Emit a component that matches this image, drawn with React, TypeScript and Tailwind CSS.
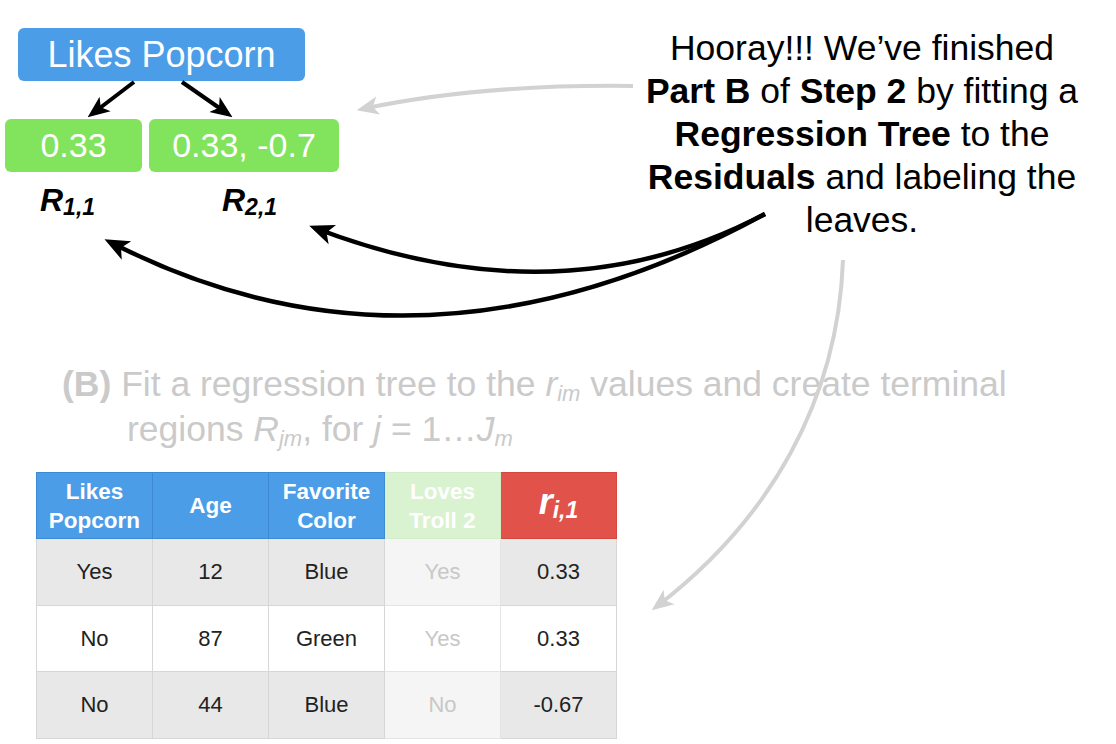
import React from "react";

const rows = [
  { pop: "Yes", age: "12", color: "Blue", troll: "Yes", r: "0.33", bg: "bg-[#e8e8e8]", fade: "bg-[#f5f5f5]" },
  { pop: "No", age: "87", color: "Green", troll: "Yes", r: "0.33", bg: "bg-white", fade: "bg-white" },
  { pop: "No", age: "44", color: "Blue", troll: "No", r: "-0.67", bg: "bg-[#e8e8e8]", fade: "bg-[#f5f5f5]" },
];

function Arrows() {
  return (
    <svg className="absolute inset-0 pointer-events-none" width="1116" height="744" viewBox="0 0 1116 744">
      <defs>
        <marker id="hb" viewBox="0 0 12 10" refX="9" refY="5" markerWidth="5.5" markerHeight="5.5" orient="auto" markerUnits="strokeWidth">
          <path d="M0,0 L12,5 L0,10 L3,5 z" fill="#000" />
        </marker>
        <marker id="hg" viewBox="0 0 12 10" refX="9" refY="5" markerWidth="5.5" markerHeight="5.5" orient="auto" markerUnits="strokeWidth">
          <path d="M0,0 L12,5 L0,10 L3,5 z" fill="#d2d2d2" />
        </marker>
      </defs>
      {/* tree edges */}
      <path d="M134,82 L92,114" stroke="#000" strokeWidth="4" fill="none" markerEnd="url(#hb)" />
      <path d="M182,82 L228,114" stroke="#000" strokeWidth="4" fill="none" markerEnd="url(#hb)" />
      {/* grey pointers */}
      <path d="M633,86 Q480,84 362,109" stroke="#d2d2d2" strokeWidth="4" fill="none" markerEnd="url(#hg)" />
      <path d="M843,260 C838,400 770,520 656,607" stroke="#d2d2d2" strokeWidth="4" fill="none" markerEnd="url(#hg)" />
      {/* leaf pointers */}
      <path d="M765,214 Q560,322 315,228" stroke="#000" strokeWidth="4.5" fill="none" markerEnd="url(#hb)" />
      <path d="M765,214 Q420,402 110,242" stroke="#000" strokeWidth="4.5" fill="none" markerEnd="url(#hb)" />
    </svg>
  );
}

function RLabel({ sub }: { sub: string }) {
  return (
    <span className="font-bold italic text-[32px] text-black leading-none">
      R<span className="text-[23px] align-[-4px]">{sub}</span>
    </span>
  );
}

function Sub({ children }: { children: React.ReactNode }) {
  return <span className="text-[22px] italic leading-none align-[-5px]">{children}</span>;
}

export default function App() {
  return (
    <div
      className="relative w-[1116px] h-[744px] bg-white overflow-hidden"
      style={{ fontFamily: '"Liberation Sans", Arial, sans-serif' }}
    >
      {/* Top row */}
      <div className="flex justify-between">
        <div className="pl-[5px] pt-[28px]">
          <div className="ml-[13px] w-[287px] h-[53px] rounded-[6px] bg-[#4b9de8] flex items-center justify-center text-white text-[36px]">
            Likes Popcorn
          </div>
          <div className="flex gap-[7px] mt-[38px]">
            <div className="w-[137px] h-[53px] rounded-[6px] bg-[#82e35c] flex items-center justify-center text-white text-[34px]">
              0.33
            </div>
            <div className="w-[190px] h-[53px] rounded-[6px] bg-[#82e35c] flex items-center justify-center text-white text-[34px]">
              0.33, -0.7
            </div>
          </div>
          <div className="flex mt-[12px]">
            <div className="w-[137px] pl-[35px]">
              <RLabel sub="1,1" />
            </div>
            <div className="pl-[80px]">
              <RLabel sub="2,1" />
            </div>
          </div>
        </div>
        <div className="w-[500px] mr-[4px] pt-[27px] text-center text-black text-[35.5px] leading-[43px]">
          Hooray!!! We’ve finished
          <br />
          <b>Part B</b> of <b>Step 2</b> by fitting a
          <br />
          <b>Regression Tree</b> to the
          <br />
          <b>Residuals</b> and labeling the
          <br />
          leaves.
        </div>
      </div>

      {/* Step text */}
      <div className="mt-[120px] pl-[62px] text-[35.5px] leading-[45px] text-[#cacaca]">
        <div>
          <b>(B)</b> Fit a regression tree to the <i>r</i>
          <Sub>im</Sub> values and create terminal
        </div>
        <div className="pl-[65px]">
          regions <i>R</i>
          <Sub>jm</Sub>, for <i>j</i> = 1…<i>J</i>
          <Sub>m</Sub>
        </div>
      </div>

      {/* Table */}
      <table className="ml-[36px] mt-[20px] border-collapse text-[22px] text-center">
        <thead>
          <tr className="h-[66px] text-white font-bold text-[22.5px] leading-[29px]">
            <th className="w-[116px] bg-[#4b9de8] border border-[#3d8ad2]">
              Likes
              <br />
              Popcorn
            </th>
            <th className="w-[116px] bg-[#4b9de8] border border-[#3d8ad2]">Age</th>
            <th className="w-[116px] bg-[#4b9de8] border border-[#3d8ad2]">
              Favorite
              <br />
              Color
            </th>
            <th className="w-[116px] bg-[#d9f2d0] border border-[#d2ecc8]">
              Loves
              <br />
              Troll 2
            </th>
            <th className="w-[116px] bg-[#e0524a] border border-[#d44840] italic">
              <span className="text-[36px]">r</span>
              <span className="text-[23px] align-[-4px]">i,1</span>
            </th>
          </tr>
        </thead>
        <tbody>
          {rows.map((r, i) => (
            <tr key={i} className="h-[66.5px] text-[#222]">
              <td className={`${r.bg} border border-[#d6d6d6]`}>{r.pop}</td>
              <td className={`${r.bg} border border-[#d6d6d6]`}>{r.age}</td>
              <td className={`${r.bg} border border-[#d6d6d6]`}>{r.color}</td>
              <td className={`${r.fade} border border-[#e4e4e4] text-[#c8c8c8]`}>{r.troll}</td>
              <td className={`${r.bg} border border-[#d6d6d6]`}>{r.r}</td>
            </tr>
          ))}
        </tbody>
      </table>

      <Arrows />
    </div>
  );
}
